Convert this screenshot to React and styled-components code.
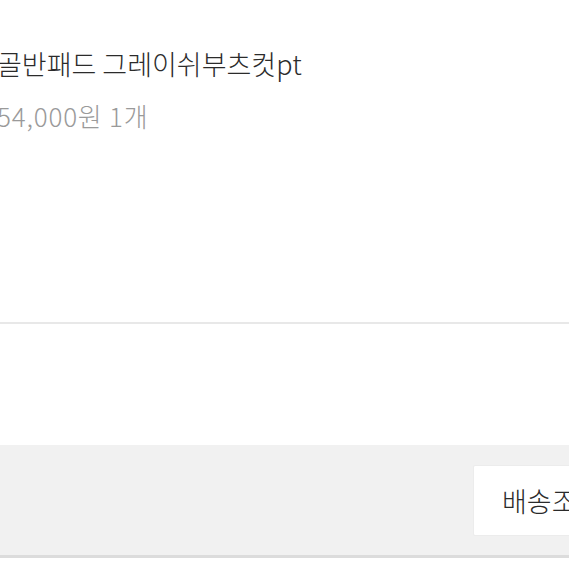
import React from "react";
import styled, { createGlobalStyle } from "styled-components";

const GlobalStyle = createGlobalStyle`
  html, body {
    margin: 0;
    padding: 0;
    background: #ffffff;
    font-family: "Noto Sans CJK KR", "Noto Sans", sans-serif;
    overflow: hidden;
  }
`;

const Page = styled.div`
  width: 569px;
  height: 569px;
  display: flex;
  flex-direction: column;
  background: #ffffff;
`;

const Product = styled.div`
  height: 324px;
  padding-top: 47px;
  box-sizing: border-box;
  margin-left: -3px;
  display: flex;
  flex-direction: column;
  gap: 19px;
  border-bottom: 2px solid #e8e8e8;
`;

const Title = styled.div`
  font-size: 27px;
  font-weight: 300;
  line-height: 34px;
  color: #2b2b2b;
  white-space: nowrap;
`;

const Meta = styled.div`
  font-size: 26px;
  font-weight: 300;
  line-height: 32px;
  color: #9a9a9a;
  letter-spacing: 0.8px;
  white-space: nowrap;
`;

const Spacer = styled.div`
  height: 121px;
`;

const Footer = styled.div`
  height: 110px;
  background: #f1f1f1;
  border-bottom: 3px solid #dcdcdc;
  display: flex;
  align-items: center;
  justify-content: flex-end;
  overflow: hidden;
`;

const Button = styled.button`
  flex-shrink: 0;
  width: 160px;
  height: 71px;
  margin-right: -64px;
  background: #ffffff;
  border: 1px solid #ececec;
  border-radius: 2px;
  padding: 0 0 0 28px;
  text-align: left;
  font-family: inherit;
  font-size: 27px;
  font-weight: 300;
  color: #2a2a2a;
  white-space: nowrap;
`;

export default function App() {
  return (
    <Page>
      <GlobalStyle />
      <Product>
        <Title>골반패드 그레이쉬부츠컷pt</Title>
        <Meta>54,000원 1개</Meta>
      </Product>
      <Spacer />
      <Footer>
        <Button>배송조회</Button>
      </Footer>
    </Page>
  );
}
